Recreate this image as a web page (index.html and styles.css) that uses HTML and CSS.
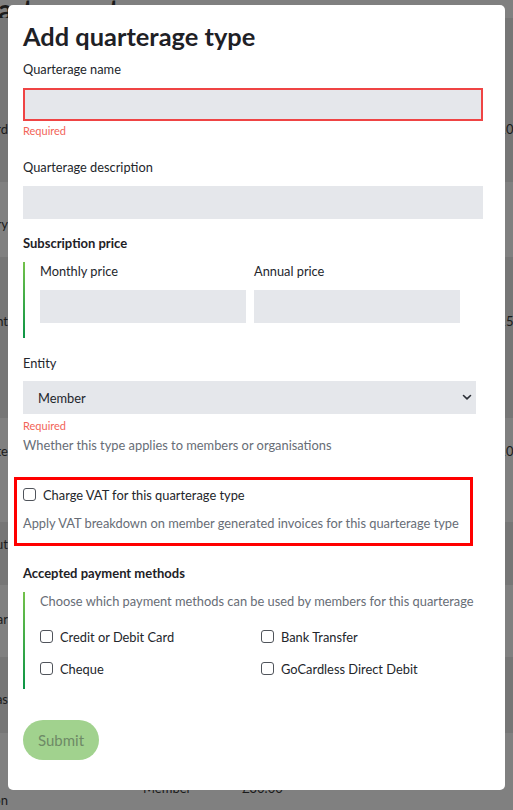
FILE: index.html
```html
<!DOCTYPE html>
<html lang="en">
<head>
<meta charset="utf-8">
<title>Add quarterage type</title>
<link rel="stylesheet" href="styles.css">
</head>
<body>
<div class="page">
  <div class="bg">
    <div class="bg-head"><h2 class="bg-title">Quarterage types</h2></div>
    <div class="bg-row r1"><span class="c-name">Standard</span><span class="c-entity">Member</span><span class="c-month">£10.00</span><span class="c-year">£100.00</span></div>
    <div class="bg-row r2"><span class="c-name">Honorary</span><span class="c-entity">Member</span><span class="c-month">£0.00</span><span class="c-year"></span></div>
    <div class="bg-row r3"><span class="c-name">Student</span><span class="c-entity">Member</span><span class="c-month">£15.00</span><span class="c-year">£150.00</span></div>
    <div class="bg-row r4"><span class="c-name">Associate</span><span class="c-entity">Member</span><span class="c-month">£10.00</span><span class="c-year">£100.00</span></div>
    <div class="bg-row r5"><span class="c-name">Without</span><span class="c-entity">Member</span><span class="c-month">£5.00</span><span class="c-year"></span></div>
    <div class="bg-row r6"><span class="c-name">Scholar</span><span class="c-entity">Member</span><span class="c-month">£5.00</span><span class="c-year"></span></div>
    <div class="bg-row r7"><span class="c-name">Overseas</span><span class="c-entity">Member</span><span class="c-month">£8.00</span><span class="c-year"></span></div>
    <div class="bg-row r8"><span class="c-name">Education</span><span class="c-entity">Member</span><span class="c-month">£30.00</span><span class="c-year"></span></div>
  </div>

  <div class="modal">
    <h1 class="m-title">Add quarterage type</h1>

    <label class="lbl lbl-first">Quarterage name</label>
    <input class="inp inp-err" type="text">
    <p class="err">Required</p>

    <label class="lbl lbl-desc">Quarterage description</label>
    <input class="inp" type="text">

    <h3 class="sec sec-price">Subscription price</h3>
    <div class="bar bar-price">
      <div class="price-grid">
        <div class="pcol">
          <label class="lbl">Monthly price</label>
          <input class="inp" type="text">
        </div>
        <div class="pcol">
          <label class="lbl">Annual price</label>
          <input class="inp" type="text">
        </div>
      </div>
    </div>

    <label class="lbl lbl-entity">Entity</label>
    <div class="select">
      <span>Member</span>
      <svg class="chev" width="10" height="7" viewBox="0 0 10 7"><path d="M1.5 1.5 L5 4.8 L8.5 1.5" fill="none" stroke="#2b2f36" stroke-width="1.6" stroke-linecap="round" stroke-linejoin="round"/></svg>
    </div>
    <p class="err err-entity">Required</p>
    <p class="hint hint-entity">Whether this type applies to members or organisations</p>

    <div class="vat-box">
      <label class="check"><span class="cb"></span>Charge VAT for this quarterage type</label>
      <p class="hint hint-vat">Apply VAT breakdown on member generated invoices for this quarterage type</p>
    </div>

    <h3 class="sec sec-pay">Accepted payment methods</h3>
    <div class="bar bar-pay">
      <p class="hint">Choose which payment methods can be used by members for this quarterage</p>
      <div class="pay-grid">
        <label class="check"><span class="cb"></span>Credit or Debit Card</label>
        <label class="check"><span class="cb"></span>Bank Transfer</label>
        <label class="check"><span class="cb"></span>Cheque</label>
        <label class="check"><span class="cb"></span>GoCardless Direct Debit</label>
      </div>
    </div>

    <button class="submit" type="button">Submit</button>
  </div>
</div>
</body>
</html>
```
FILE: styles.css
```css
html, body {
  margin: 0;
  padding: 0;
  overflow: hidden;
}

body {
  font-family: Lato, "Noto Sans", sans-serif;
  background: #808080;
  width: 513px;
  height: 810px;
}

.page {
  position: relative;
  width: 513px;
  height: 810px;
  overflow: hidden;
}

/* dimmed page behind the dialog */
.bg {
  display: flex;
  flex-direction: column;
  color: #1b1b1b;
  font-size: 13px;
  line-height: 18px;
}

.bg-head {
  height: 18px;
  background: #808080;
}

.bg-title {
  margin: 0 0 0 -40px;
  font-size: 28px;
  font-weight: 700;
  line-height: 18px;
  white-space: nowrap;
}

.bg-row {
  display: grid;
  grid-template-columns: 208px 234px 249px 1fr;
  margin-left: -200px;
  width: 713px;
  align-items: start;
  white-space: nowrap;
}

.bg-row:nth-child(even) { background: #767676; }
.bg-row:nth-child(odd) { background: #808080; }

.c-name { text-align: right; }
.c-entity { padding-left: 135px; }

.r1 { height: 164px; padding-top: 102px; box-sizing: border-box; }
.r2 { height: 75px; padding-top: 33px; box-sizing: border-box; }
.r3 { height: 161px; padding-top: 55px; box-sizing: border-box; }
.r4 { height: 104px; padding-top: 24px; box-sizing: border-box; }
.r5 { height: 63px; padding-top: 13px; box-sizing: border-box; }
.r6 { height: 72px; padding-top: 25px; box-sizing: border-box; }
.r7 { height: 76px; padding-top: 33px; box-sizing: border-box; }
.r8 { height: 120px; padding-top: 58px; box-sizing: border-box; }
.r8 .c-entity, .r8 .c-month { margin-top: -12px; }

/* dialog */
.modal {
  position: absolute;
  left: 8px;
  top: 5px;
  width: 497px;
  height: 785px;
  box-sizing: border-box;
  background: #ffffff;
  border-radius: 5px;
  padding: 15px 15px 0 15px;
  display: flex;
  flex-direction: column;
  align-items: flex-start;
  color: #23262b;
}

.m-title {
  margin: 0;
  font-size: 25.4px;
  font-weight: 700;
  line-height: 32px;
  color: #1e2126;
}

.lbl {
  display: block;
  font-size: 12.8px;
  line-height: 18px;
  color: #23262b;
}

.lbl-first { margin-top: 8px; }
.lbl-desc { margin-top: 20px; }
.lbl-entity { margin-top: 16px; }

.inp {
  display: block;
  box-sizing: border-box;
  width: 460px;
  height: 33px;
  margin: 10px 0 0 0;
  border: none;
  border-radius: 0;
  background: #e5e7eb;
  padding: 0 12px;
  font: inherit;
}

.inp-err {
  border: 2px solid #ef4444;
}

.err {
  margin: 3px 0 0 0;
  font-size: 11px;
  line-height: 14px;
  color: #f26459;
}

.err-entity { margin-top: 5px; }

.hint {
  margin: 0;
  font-size: 12.85px;
  line-height: 18px;
  color: #676d76;
  white-space: nowrap;
}

.hint-entity { margin-top: 3px; }

.sec {
  margin: 0;
  font-size: 13px;
  font-weight: 700;
  line-height: 18px;
  color: #1e2126;
}

.sec-price { margin-top: 15px; }
.sec-pay { margin-top: 18px; }

.bar {
  margin-top: 10px;
  padding-left: 15px;
  border-left: 2px solid #3aa64a;
  border-image: linear-gradient(to bottom, #74c24b, #0a9445) 1;
}

.bar-price { padding-bottom: 15px; }
.bar-pay { padding-bottom: 11px; }

.price-grid {
  display: grid;
  grid-template-columns: 206px 206px;
  column-gap: 8px;
}

.price-grid .inp { width: 206px; }

.select {
  margin-top: 9px;
  box-sizing: border-box;
  width: 453px;
  height: 33px;
  background: #e5e7eb;
  display: flex;
  align-items: center;
  justify-content: space-between;
  padding: 0 4px 0 15px;
  font-size: 12.85px;
  color: #23262b;
}

.vat-box {
  margin: 23px 0 0 -9px;
  box-sizing: border-box;
  width: 459px;
  border: 3px solid #ff0000;
  padding: 6px 6px 11px 6px;
}

.hint-vat { margin-top: 10px; }

.check {
  display: flex;
  align-items: center;
  gap: 7px;
  font-size: 12.85px;
  line-height: 18px;
  color: #23262b;
}

.cb {
  display: block;
  width: 13px;
  height: 13px;
  box-sizing: border-box;
  border: 1px solid #50545b;
  border-radius: 3px;
  background: #ffffff;
  margin-top: -2px;
}

.pay-grid {
  display: grid;
  grid-template-columns: 221px 221px;
  row-gap: 14px;
  margin-top: 18px;
}

.submit {
  margin-top: 31px;
  width: 76px;
  height: 40px;
  border: none;
  border-radius: 20px;
  background: #a1d28e;
  color: #6e8a66;
  font-family: Lato, "Noto Sans", sans-serif;
  font-size: 15px;
  padding: 0;
}
```
